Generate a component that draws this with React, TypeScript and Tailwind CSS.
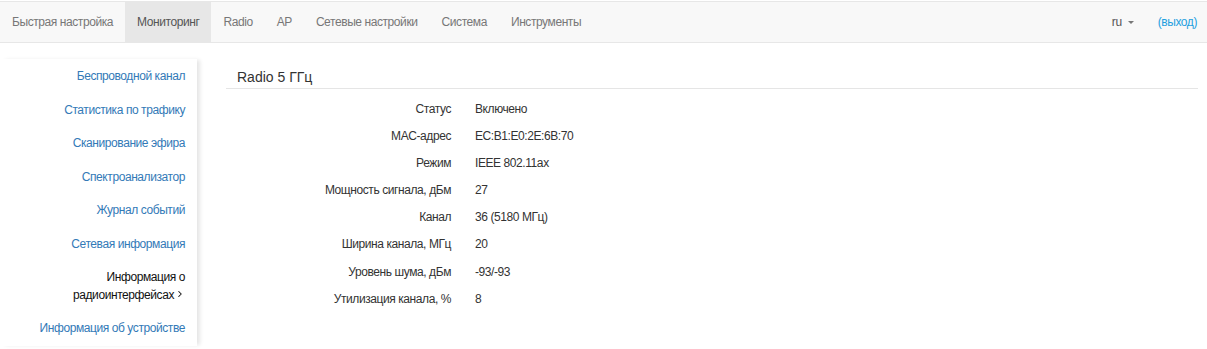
import { ChevronRight } from "lucide-react";

const topMenu = [
  "Быстрая настройка",
  "Мониторинг",
  "Radio",
  "AP",
  "Сетевые настройки",
  "Система",
  "Инструменты",
];

const sideMenu = [
  "Беспроводной канал",
  "Статистика по трафику",
  "Сканирование эфира",
  "Спектроанализатор",
  "Журнал событий",
  "Сетевая информация",
  "ACTIVE",
  "Информация об устройстве",
];

const rows: [string, string][] = [
  ["Статус", "Включено"],
  ["MAC-адрес", "EC:B1:E0:2E:6B:70"],
  ["Режим", "IEEE 802.11ax"],
  ["Мощность сигнала, дБм", "27"],
  ["Канал", "36 (5180 МГц)"],
  ["Ширина канала, МГц", "20"],
  ["Уровень шума, дБм", "-93/-93"],
  ["Утилизация канала, %", "8"],
];

export default function App() {
  return (
    <div className="w-full h-[349px] overflow-hidden bg-white font-['Liberation_Sans',Arial,sans-serif] text-[12px] tracking-[-0.42px] text-[#333]">
      {/* top navbar */}
      <nav className="mt-px h-[42px] flex items-stretch justify-between bg-[#f8f8f8] border-y border-[#e7e7e7]">
        <ul className="flex items-stretch">
          {topMenu.map((item) => (
            <li
              key={item}
              className={`flex items-center px-3 ${
                item === "Мониторинг" ? "bg-[#e7e7e7] text-[#555]" : "text-[#777]"
              }`}
            >
              {item}
            </li>
          ))}
        </ul>
        <ul className="flex items-stretch pr-[10px]">
          <li className="flex items-center px-3 text-[#555]">
            ru
            <span className="ml-[6px] mt-px w-0 h-0 border-t-[3px] border-t-[#777] border-x-[3px] border-x-transparent" />
          </li>
          <li className="flex items-center pl-3 text-[#1fa0df]">(выход)</li>
        </ul>
      </nav>

      <div className="flex mt-[16px]">
        {/* side menu */}
        <aside className="w-[197px] shrink-0 pt-px bg-white shadow-[4px_0_4px_-1px_rgba(0,0,0,0.1)]">
          {sideMenu.map((item) =>
            item === "ACTIVE" ? (
              <div key={item} className="pr-3 py-2 leading-[17.5px] text-right text-[#111]">
                Информация о
                <br />
                радиоинтерфейсах
                <ChevronRight className="inline-block w-[10px] h-[10px] ml-[1px] -mt-[2px]" strokeWidth={2.5} />
              </div>
            ) : (
              <div key={item} className="pr-3 py-2 leading-[17.5px] text-right text-[#337ab7]">
                {item}
              </div>
            )
          )}
        </aside>

        {/* content */}
        <main className="flex-1 pl-[29px] pr-[9px]">
          <h3 className="pt-[8px] pb-[1px] pl-[11px] text-[14px] tracking-normal leading-5 border-b border-[#e5e5e5]">
            Radio 5 ГГц
          </h3>
          <div className="mt-[7px] grid grid-cols-[225px_1fr] gap-x-6">
            {rows.map(([label, value]) => (
              <div key={label} className="contents">
                <div className="text-right py-[5px] leading-[17.1px]">{label}</div>
                <div className="py-[5px] leading-[17.1px]">{value}</div>
              </div>
            ))}
          </div>
        </main>
      </div>
    </div>
  );
}
